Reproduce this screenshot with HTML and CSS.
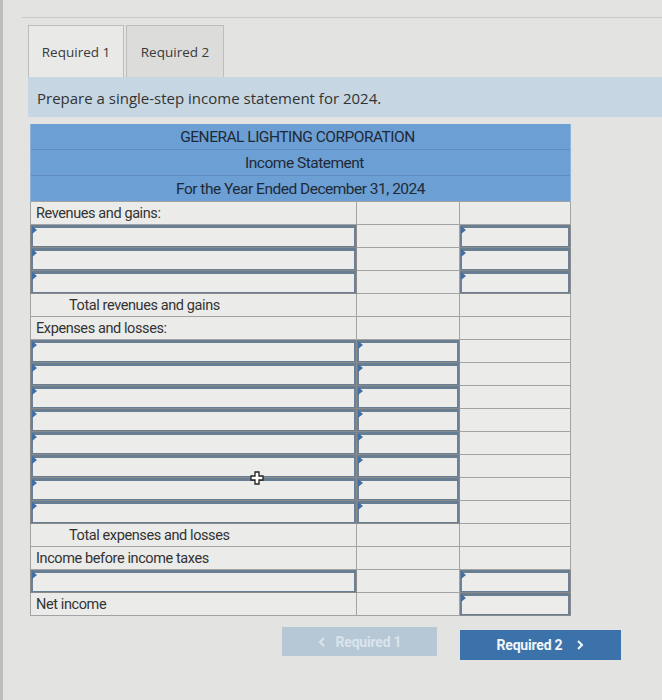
FILE: index.html
```html
<!DOCTYPE html>
<html>
<head>
<meta charset="utf-8">
<link rel="stylesheet" href="styles.css">
</head>
<body>
<div class="page">
  <div class="topline"></div>
  <div class="tabs">
    <div class="tab tab-active">Required 1</div>
    <div class="tab">Required 2</div>
  </div>
  <div class="instr">Prepare a single-step income statement for 2024.</div>

  <table class="stmt">
    <colgroup><col class="c1"><col class="c2"><col class="c3"></colgroup>
    <thead>
      <tr><th colspan="3">GENERAL LIGHTING CORPORATION</th></tr>
      <tr><th colspan="3">Income Statement</th></tr>
      <tr><th colspan="3">For the Year Ended December 31, 2024</th></tr>
    </thead>
    <tbody>
      <tr><td class="lbl">Revenues and gains:</td><td></td><td></td></tr>
      <tr><td class="in"><div class="box"></div></td><td></td><td class="in"><div class="box"></div></td></tr>
      <tr><td class="in"><div class="box"></div></td><td></td><td class="in"><div class="box"></div></td></tr>
      <tr><td class="in"><div class="box"></div></td><td></td><td class="in"><div class="box"></div></td></tr>
      <tr><td class="lbl ind">Total revenues and gains</td><td></td><td></td></tr>
      <tr><td class="lbl">Expenses and losses:</td><td></td><td></td></tr>
      <tr><td class="in"><div class="box"></div></td><td class="in"><div class="box"></div></td><td></td></tr>
      <tr><td class="in"><div class="box"></div></td><td class="in"><div class="box"></div></td><td></td></tr>
      <tr><td class="in"><div class="box"></div></td><td class="in"><div class="box"></div></td><td></td></tr>
      <tr><td class="in"><div class="box"></div></td><td class="in"><div class="box"></div></td><td></td></tr>
      <tr><td class="in"><div class="box"></div></td><td class="in"><div class="box"></div></td><td></td></tr>
      <tr><td class="in"><div class="box"></div></td><td class="in"><div class="box"></div></td><td></td></tr>
      <tr><td class="in"><div class="box"></div></td><td class="in"><div class="box"></div></td><td></td></tr>
      <tr><td class="in"><div class="box"></div></td><td class="in"><div class="box"></div></td><td></td></tr>
      <tr><td class="lbl ind">Total expenses and losses</td><td></td><td></td></tr>
      <tr><td class="lbl">Income before income taxes</td><td></td><td></td></tr>
      <tr><td class="in"><div class="box"></div></td><td></td><td class="in"><div class="box"></div></td></tr>
      <tr><td class="lbl">Net income</td><td></td><td class="in"><div class="box"></div></td></tr>
    </tbody>
  </table>

  <div class="nav">
    <div class="btn btn-off">
      <svg class="chev" width="8" height="10" viewBox="0 0 8 10"><path d="M6 1 L2 5 L6 9" fill="none" stroke="currentColor" stroke-width="2"/></svg>
      <span>Required 1</span>
    </div>
    <div class="btn btn-on">
      <span>Required 2</span>
      <svg class="chev" width="8" height="10" viewBox="0 0 8 10"><path d="M2 1 L6 5 L2 9" fill="none" stroke="currentColor" stroke-width="2"/></svg>
    </div>
  </div>

  <svg class="cursor" width="14" height="14" viewBox="0 0 14 14">
    <path d="M5 1 H9 V5 H13 V9 H9 V13 H5 V9 H1 V5 H5 Z" fill="#fff" stroke="#222" stroke-width="1.3"/>
  </svg>
</div>
</body>
</html>
```

FILE: styles.css
```css
html, body {
  margin: 0;
  padding: 0;
}
body {
  background: #e3e3e1;
  font-family: "Open Sans", "DejaVu Sans", sans-serif;
  color: #333;
}
.page {
  position: relative;
  width: 662px;
  height: 700px;
  padding-top: 17px;
  border-left: 3px solid #bdbdbb;
  box-sizing: border-box;
}
.topline {
  margin-left: 19px;
  border-top: 1px solid #cbcbc9;
}
.tabs {
  display: flex;
  gap: 2px;
  margin-left: 25px;
  margin-top: 7px;
}
.tab {
  height: 52px;
  box-sizing: border-box;
  border: 1px solid #bdbdbb;
  border-bottom: none;
  background: #dcdcda;
  display: flex;
  align-items: center;
  justify-content: center;
  font-size: 13.5px;
  color: #3a3a3a;
  width: 98px;
}
.tab-active {
  width: 96px;
  background: #e9e9e8;
}
.instr {
  margin-left: 25px;
  height: 40px;
  background: #c6d6e2;
  padding-left: 9px;
  font-size: 15px;
  line-height: 42px;
  color: #333;
}
.stmt {
  margin-left: 27px;
  margin-top: 7px;
  width: 540px;
  border-collapse: collapse;
  table-layout: fixed;
  font-family: "Roboto", "Liberation Sans", sans-serif;
}
.c1 { width: 326px; }
.c2 { width: 103px; }
.c3 { width: 111px; }
.stmt th {
  height: 25px;
  padding: 0;
  background: #6c9fd3;
  border-top: 1px solid #5f8cbc;
  border-left: 1px solid #8fb4da;
  border-right: 1px solid #8fb4da;
  font-weight: normal;
  font-size: 15.5px;
  color: #1f2a38;
  letter-spacing: -0.5px;
  text-align: center;
  vertical-align: middle;
}
.stmt thead tr:first-child th { border-top: none; }
.stmt thead tr:nth-child(1) th { padding-right: 6px; }
.stmt thead tr:nth-child(2) th { padding-left: 8px; }
.stmt td {
  height: 22px;
  padding: 0;
  border: 1px solid #a3a3a3;
  background: #ebebea;
  font-size: 14.5px;
  color: #333;
  letter-spacing: -0.4px;
  vertical-align: middle;
}
.stmt td.lbl {
  padding-left: 5px;
  white-space: nowrap;
}
.stmt td.ind {
  padding-left: 38px;
}
.stmt td.in {
  padding: 0;
  border-color: #8a8a8a;
}
.box {
  position: relative;
  height: 22px;
  box-sizing: border-box;
  border-top: 3px solid #687e93;
  border-bottom: 1px solid #687e93;
  border-left: 2px solid #6c8198;
  border-right: 2px solid #6c8198;
  background: #ececeb;
}
.box::before {
  content: "";
  position: absolute;
  left: -1px;
  top: -2px;
  border-top: 4px solid transparent;
  border-bottom: 4px solid transparent;
  border-left: 5px solid #3f6fa5;
}
.nav {
  display: flex;
  gap: 23px;
  margin-top: 11px;
  margin-left: 279px;
  align-items: flex-start;
}
.btn {
  display: flex;
  align-items: center;
  justify-content: center;
  gap: 10px;
  font-family: "Roboto", "Liberation Sans", sans-serif;
  font-weight: 700;
  font-size: 14px;
  letter-spacing: -0.2px;
}
.btn-off {
  width: 155px;
  height: 29px;
  background: #b6c8d5;
  color: #dbe4ec;
}
.btn-on {
  width: 161px;
  height: 30px;
  margin-top: 3px;
  background: #3b72a9;
  color: #f2f6fa;
  gap: 14px;
}
.cursor {
  position: absolute;
  left: 247px;
  top: 471px;
}
```
